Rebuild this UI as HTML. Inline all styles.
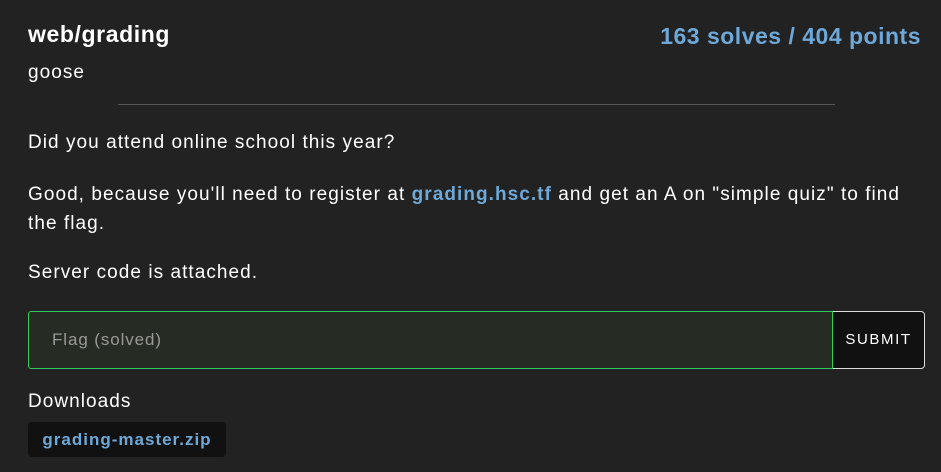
<!DOCTYPE html>
<html><head><style>
body{margin:0;width:941px;height:472px;background:#222;color:#fff;font-family:"Liberation Sans",sans-serif;position:relative;overflow:hidden}
.a{position:absolute;white-space:nowrap}
.t{font-size:19px;letter-spacing:1.05px}
</style></head><body>
<div class="a" style="left:28px;top:21px;font-size:23px;letter-spacing:0.6px;font-weight:bold">web/grading</div>
<div class="a" style="right:20px;top:23px;font-size:23px;letter-spacing:0.5px;font-weight:bold;color:#6ea8d8">163 solves / 404 points</div>
<div class="a t" style="left:28px;top:62px">goose</div>
<div class="a" style="left:118px;top:104px;width:717px;height:1px;background:#555"></div>
<div class="a t" style="left:28px;top:132px">Did you attend online school this year?</div>
<div class="a t" style="left:28px;top:180px;line-height:29px">Good, because you'll need to register at <b style="color:#6ea8d8">grading.hsc.tf</b> and get an A on "simple quiz" to find<br>the flag.</div>
<div class="a t" style="left:28px;top:262px">Server code is attached.</div>
<div class="a" style="left:28px;top:311px;width:803px;height:56px;border:1.5px solid #2ecc5a;border-radius:3px 0 0 3px;background:#262b24"></div>
<div class="a" style="left:52px;top:330px;font-size:17px;letter-spacing:0.9px;color:#999">Flag (solved)</div>
<div class="a" style="left:833px;top:311px;width:91px;height:56px;border:1.5px solid #ddd;border-left:none;border-radius:0 4px 4px 0;background:#111;font-size:15px;letter-spacing:1.6px;line-height:56px;text-align:center">SUBMIT</div>
<div class="a t" style="left:28px;top:391px">Downloads</div>
<div class="a" style="left:28px;top:422px;width:198px;height:35px;background:#111;border-radius:4px;color:#6ea8d8;font-weight:bold;font-size:17px;letter-spacing:1px;line-height:35px;text-align:center">grading-master.zip</div>
</body></html>
